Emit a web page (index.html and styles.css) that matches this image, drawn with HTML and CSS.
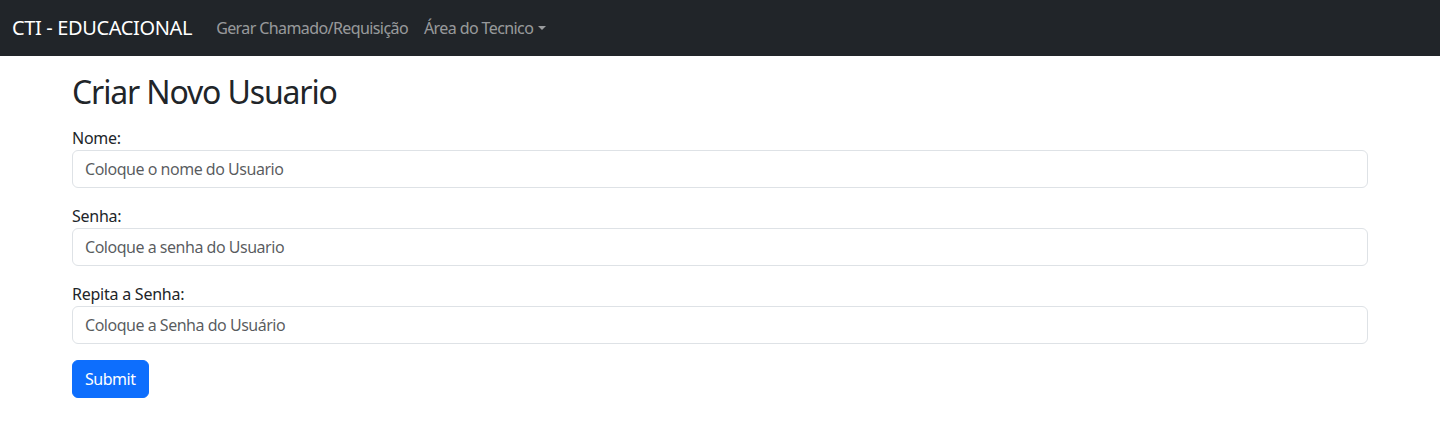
FILE: index.html
```html
<!DOCTYPE html>
<html lang="pt-BR">
<head>
<meta charset="utf-8">
<title>Criar Novo Usuario</title>
<link rel="stylesheet" href="styles.css">
</head>
<body>
<nav class="navbar">
  <a class="brand" href="#">CTI - EDUCACIONAL</a>
  <ul class="nav">
    <li><a class="nav-link" href="#">Gerar Chamado/Requisição</a></li>
    <li><a class="nav-link dropdown" href="#">Área do Tecnico</a></li>
  </ul>
</nav>
<main class="container">
  <h2 class="title">Criar Novo Usuario</h2>
  <form class="form">
    <div class="field">
      <label for="nome">Nome:</label>
      <input id="nome" class="input" type="text" placeholder="Coloque o nome do Usuario">
    </div>
    <div class="field">
      <label for="senha">Senha:</label>
      <input id="senha" class="input" type="password" placeholder="Coloque a senha do Usuario">
    </div>
    <div class="field">
      <label for="senha2">Repita a Senha:</label>
      <input id="senha2" class="input" type="password" placeholder="Coloque a Senha do Usuário">
    </div>
    <div><button class="btn" type="submit">Submit</button></div>
  </form>
</main>
</body>
</html>
```

FILE: styles.css
```css
* { box-sizing: border-box; }
html, body { margin: 0; }
body {
  font-family: "Noto Sans", "Open Sans", sans-serif;
  font-size: 16px;
  line-height: 1.5;
  color: #212529;
  background: #fff;
  letter-spacing: -0.03em;
}
.navbar {
  height: 56px;
  background: #212529;
  display: flex;
  align-items: center;
  padding: 0 12px;
}
.brand {
  color: #fff;
  text-decoration: none;
  font-size: 20px;
  margin-right: 16px;
  line-height: 1.5;
  letter-spacing: -0.018em;
}
.nav {
  display: flex;
  list-style: none;
  margin: 0;
  padding: 0;
}
.nav-link {
  display: block;
  padding: 8px;
  color: rgba(255,255,255,.55);
  text-decoration: none;
  letter-spacing: -0.037em;
}
.dropdown::after {
  content: "";
  display: inline-block;
  margin-left: .3em;
  vertical-align: .255em;
  border-top: .3em solid;
  border-right: .3em solid transparent;
  border-left: .3em solid transparent;
}
.container {
  max-width: 1320px;
  margin: 17px auto 0;
  padding: 0 12px;
}
.title {
  margin: 0 0 15px;
  font-size: 32px;
  line-height: 1.2;
  font-weight: 400;
  letter-spacing: -0.036em;
}
.field { margin-bottom: 16px; }
label { display: inline-block; letter-spacing: -0.015em; }
.input {
  display: block;
  width: 100%;
  padding: 6px 12px;
  font: inherit;
  letter-spacing: inherit;
  line-height: 1.5;
  color: #212529;
  border: 1px solid #dee2e6;
  border-radius: 6px;
  background: #fff;
}
.input::placeholder { color: rgba(33,37,41,.75); }
.btn {
  font: inherit;
  letter-spacing: inherit;
  line-height: 1.5;
  color: #fff;
  background: #0d6efd;
  border: 1px solid #0d6efd;
  border-radius: 6px;
  padding: 6px 12px;
}
```
